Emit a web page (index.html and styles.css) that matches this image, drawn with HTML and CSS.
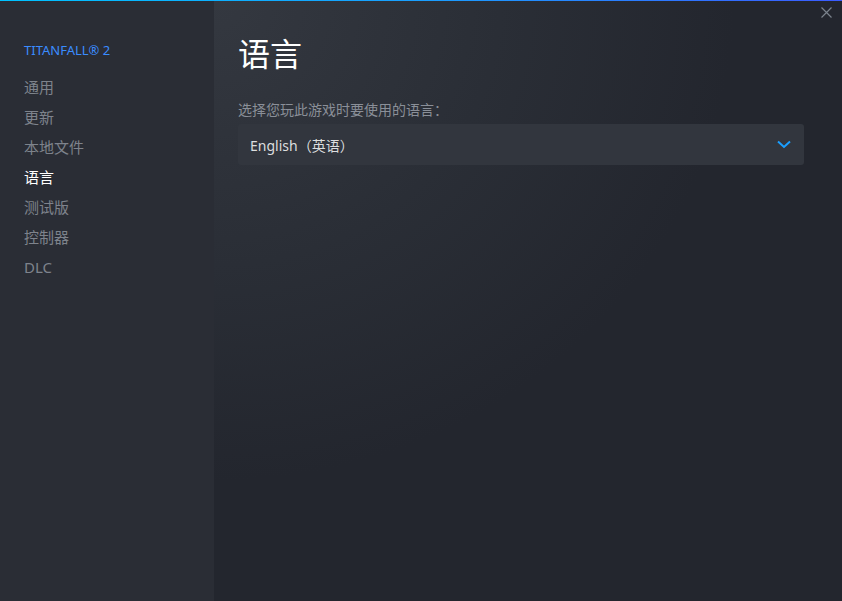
FILE: index.html
```html
<!DOCTYPE html>
<html lang="zh-CN">
<head>
  <meta charset="UTF-8">
  <title>属性 - TITANFALL® 2</title>
  <link rel="stylesheet" href="styles.css">
</head>
<body>
  <div class="window">
    <div class="accent"></div>
    <div class="layout">
      <nav class="sidebar">
        <div class="game-title">TITANFALL® 2</div>
        <ul class="menu">
          <li>通用</li>
          <li>更新</li>
          <li>本地文件</li>
          <li class="active">语言</li>
          <li>测试版</li>
          <li>控制器</li>
          <li>DLC</li>
        </ul>
      </nav>

      <main class="content">
        <h1>语言</h1>
        <div class="label">选择您玩此游戏时要使用的语言：</div>
        <div class="dropdown">
          <span>English（英语）</span>
          <svg class="chevron" width="14" height="9" viewBox="0 0 14 9">
            <path d="M1 1.5 L7 7 L13 1.5" fill="none" stroke="#1a9fff" stroke-width="2"/>
          </svg>
        </div>
      </main>
    </div>

    <button class="close" title="关闭">
      <svg width="11" height="11" viewBox="0 0 11 11">
        <path d="M0.5 0.5 L10.5 10.5 M10.5 0.5 L0.5 10.5" stroke="#7a828c" stroke-width="1.2"/>
      </svg>
    </button>
  </div>
</body>
</html>
```

FILE: styles.css
```css
body {
  margin: 0;
  font-family: "Noto Sans", "Noto Sans CJK SC", sans-serif;
  background-color: #23262e;
  overflow: hidden;
}

.window {
  position: relative;
  height: 601px;
  display: flex;
  flex-direction: column;
}

.accent {
  height: 1px;
  background: linear-gradient(to right, #00c2ff, #1a9fff 50%, #3b5cff);
}

.layout {
  flex: 1;
  display: flex;
}

.sidebar {
  width: 214px;
  background-color: #2a2d35;
  padding: 40px 0 0 24px;
  box-sizing: border-box;
}

.game-title {
  color: #3a8cff;
  font-size: 13px;
  line-height: 18px;
  margin-bottom: 18px;
}

.menu {
  list-style: none;
  margin: 0;
  padding: 0;
}

.menu li {
  color: #7e838c;
  font-size: 15px;
  line-height: 20px;
  margin-bottom: 10px;
}

.menu li.active {
  color: #ffffff;
}

.content {
  flex: 1;
  padding: 30px 38px 0 24px;
  background:
    radial-gradient(ellipse 520px 480px at 0 0, #343840 0%, #2a2e36 55%, rgba(35, 38, 46, 0) 100%),
    #23262e;
}

h1 {
  margin: 0;
  color: #ffffff;
  font-size: 32px;
  font-weight: normal;
  line-height: 46px;
}

.label {
  margin-top: 23px;
  color: #8a8f98;
  font-size: 14px;
  line-height: 20px;
}

.dropdown {
  margin-top: 4px;
  height: 41px;
  background-color: #32363e;
  border-radius: 3px;
  display: flex;
  align-items: center;
  justify-content: space-between;
  padding: 0 13px 0 12px;
  color: #dcdedf;
  font-size: 14px;
}

.close {
  position: absolute;
  top: 7px;
  right: 10px;
  padding: 0;
  border: none;
  background: none;
  line-height: 0;
}
```
